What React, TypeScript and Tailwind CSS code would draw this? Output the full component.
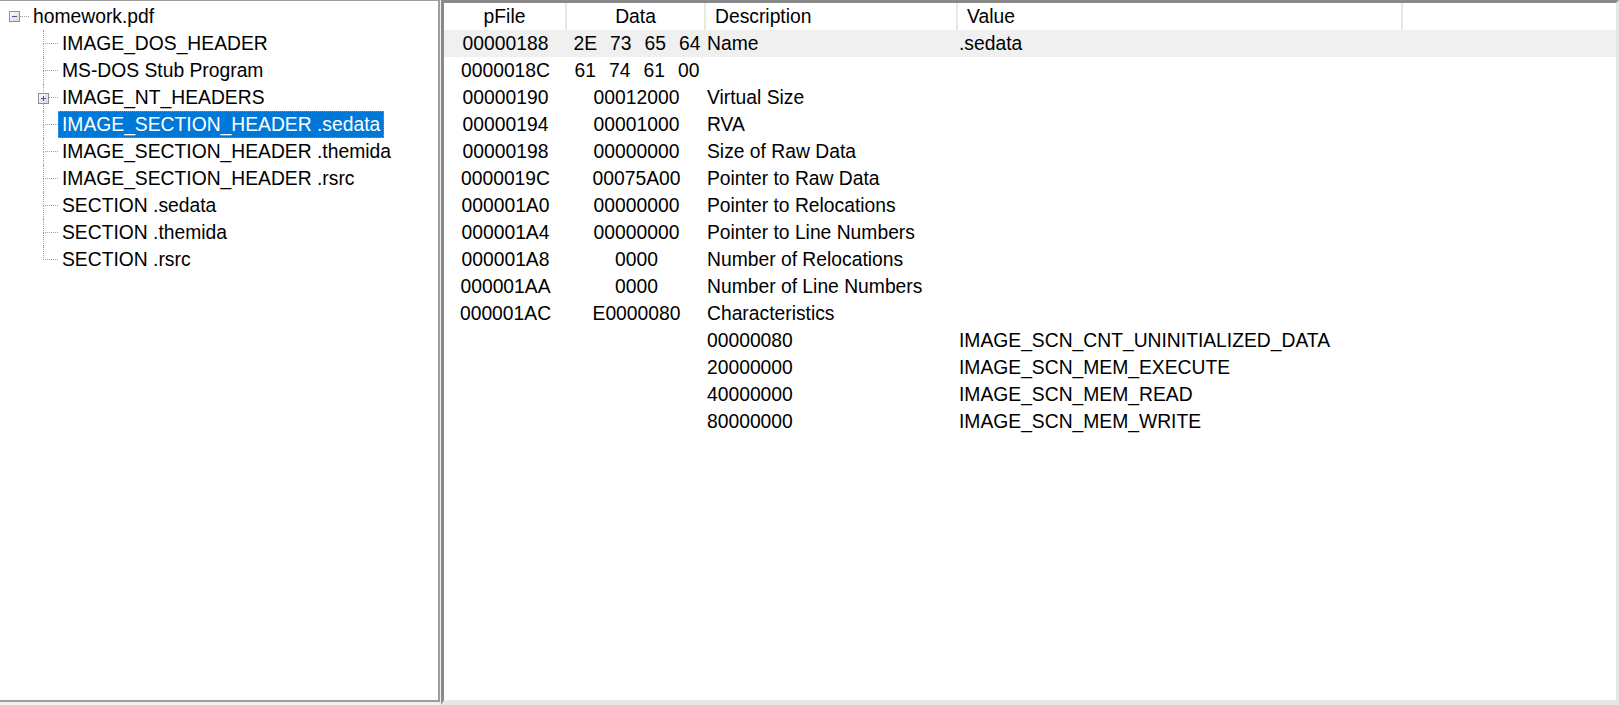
import { FunctionComponent } from "react";

type Row = {
  offset: string;
  data: string | string[];
  description: string;
  value: string;
  hot?: boolean;
};

const rows: Row[] = [
  { offset: "00000188", data: ["2E", "73", "65", "64"], description: "Name", value: ".sedata", hot: true },
  { offset: "0000018C", data: ["61", "74", "61", "00"], description: "", value: "" },
  { offset: "00000190", data: "00012000", description: "Virtual Size", value: "" },
  { offset: "00000194", data: "00001000", description: "RVA", value: "" },
  { offset: "00000198", data: "00000000", description: "Size of Raw Data", value: "" },
  { offset: "0000019C", data: "00075A00", description: "Pointer to Raw Data", value: "" },
  { offset: "000001A0", data: "00000000", description: "Pointer to Relocations", value: "" },
  { offset: "000001A4", data: "00000000", description: "Pointer to Line Numbers", value: "" },
  { offset: "000001A8", data: "0000", description: "Number of Relocations", value: "" },
  { offset: "000001AA", data: "0000", description: "Number of Line Numbers", value: "" },
  { offset: "000001AC", data: "E0000080", description: "Characteristics", value: "" },
  { offset: "", data: "", description: "00000080", value: "IMAGE_SCN_CNT_UNINITIALIZED_DATA" },
  { offset: "", data: "", description: "20000000", value: "IMAGE_SCN_MEM_EXECUTE" },
  { offset: "", data: "", description: "40000000", value: "IMAGE_SCN_MEM_READ" },
  { offset: "", data: "", description: "80000000", value: "IMAGE_SCN_MEM_WRITE" },
];

const treeItems = [
  { label: "IMAGE_DOS_HEADER" },
  { label: "MS-DOS Stub Program" },
  { label: "IMAGE_NT_HEADERS", collapsed: true },
  { label: "IMAGE_SECTION_HEADER .sedata", selected: true },
  { label: "IMAGE_SECTION_HEADER .themida" },
  { label: "IMAGE_SECTION_HEADER .rsrc" },
  { label: "SECTION .sedata" },
  { label: "SECTION .themida" },
  { label: "SECTION .rsrc" },
];

const cols = "grid grid-cols-[123px_139px_252px_445px_1fr]";

const ExpandBox: FunctionComponent<{ plus?: boolean }> = ({ plus }) => (
  <svg width="11" height="11" viewBox="0 0 11 11" className="block">
    <defs>
      <linearGradient id={plus ? "gp" : "gm"} x1="0" y1="0" x2="1" y2="1">
        <stop offset="0" stopColor="#ffffff" />
        <stop offset="1" stopColor="#d6d6d6" />
      </linearGradient>
    </defs>
    <rect x="0.5" y="0.5" width="10" height="10" fill={`url(#${plus ? "gp" : "gm"})`} stroke="#8e8f8f" />
    <path d="M3 5.5h5" stroke="#3d5c99" strokeWidth="1" />
    {plus && <path d="M5.5 3v5" stroke="#3d5c99" strokeWidth="1" />}
  </svg>
);

const TreePanel: FunctionComponent = () => (
  <div className="w-[440px] h-[702px] shrink-0 bg-white border-t border-r-2 border-b-2 border-[#9d9d9d] pt-[2px]">
    <div className="flex items-center h-[27px] pl-[9px]">
      <ExpandBox />
      <span className="w-[9px] border-t border-dotted border-[#a0a0a0]" />
      <span className="px-[3px] border border-transparent leading-[25px]">homework.pdf</span>
    </div>
    <div className="ml-[43px]">
      {treeItems.map((item, i) => {
        const last = i === treeItems.length - 1;
        return (
          <div key={item.label} className="flex h-[27px]">
            <div className="relative w-[15px] flex flex-col">
              <div className="h-[14px] border-l border-b border-dotted border-[#a0a0a0]" />
              <div className={`flex-1 ${last ? "" : "border-l border-dotted border-[#a0a0a0]"}`} />
              {item.collapsed && (
                <div className="absolute left-[-5px] top-[9px]">
                  <ExpandBox plus />
                </div>
              )}
            </div>
            <span
              className={`px-[3px] leading-[25px] border ${
                item.selected
                  ? "bg-[#0078d7] text-white border-dotted border-[#c8873a]"
                  : "border-transparent"
              }`}
            >
              {item.label}
            </span>
          </div>
        );
      })}
    </div>
  </div>
);

const DataCell: FunctionComponent<{ data: string | string[] }> = ({ data }) => {
  if (Array.isArray(data)) {
    return (
      <div className="flex justify-center gap-[13px] pl-[1px]">
        {data.map((b, i) => (
          <span key={i}>{b}</span>
        ))}
      </div>
    );
  }
  return <div className="text-center">{data}</div>;
};

const DetailPanel: FunctionComponent = () => (
  <div className="flex-1 h-[705px] ml-[1px] bg-white border-l-[3px] border-t-[3px] border-r-[3px] border-b-[5px] border-l-[#8a8a8a] border-t-[#8a8a8a] border-r-[#e6e6e6] border-b-[#e6e6e6]">
    <div className={`${cols} h-[27px] leading-[27px]`}>
      <div className="text-center border-r-2 border-[#e8e8e8]">pFile</div>
      <div className="text-center border-r-2 border-[#e8e8e8]">Data</div>
      <div className="pl-[9px] border-r-2 border-[#e8e8e8]">Description</div>
      <div className="pl-[9px] border-r-2 border-[#e8e8e8]">Value</div>
      <div />
    </div>
    {rows.map((r, i) => (
      <div key={i} className={`${cols} h-[27px] leading-[27px] ${r.hot ? "bg-[#f0f0f0]" : ""}`}>
        <div className="text-center">{r.offset}</div>
        <DataCell data={r.data} />
        <div className="pl-[1px]">{r.description}</div>
        <div className="pl-[1px]">{r.value}</div>
        <div />
      </div>
    ))}
  </div>
);

const App: FunctionComponent = () => {
  return (
    <div className="flex w-[1619px] h-[705px] overflow-hidden bg-[#f0f0f0] text-black text-[19.3px] font-['Liberation_Sans',Arial,sans-serif]">
      <TreePanel />
      <DetailPanel />
    </div>
  );
};

export default App;
